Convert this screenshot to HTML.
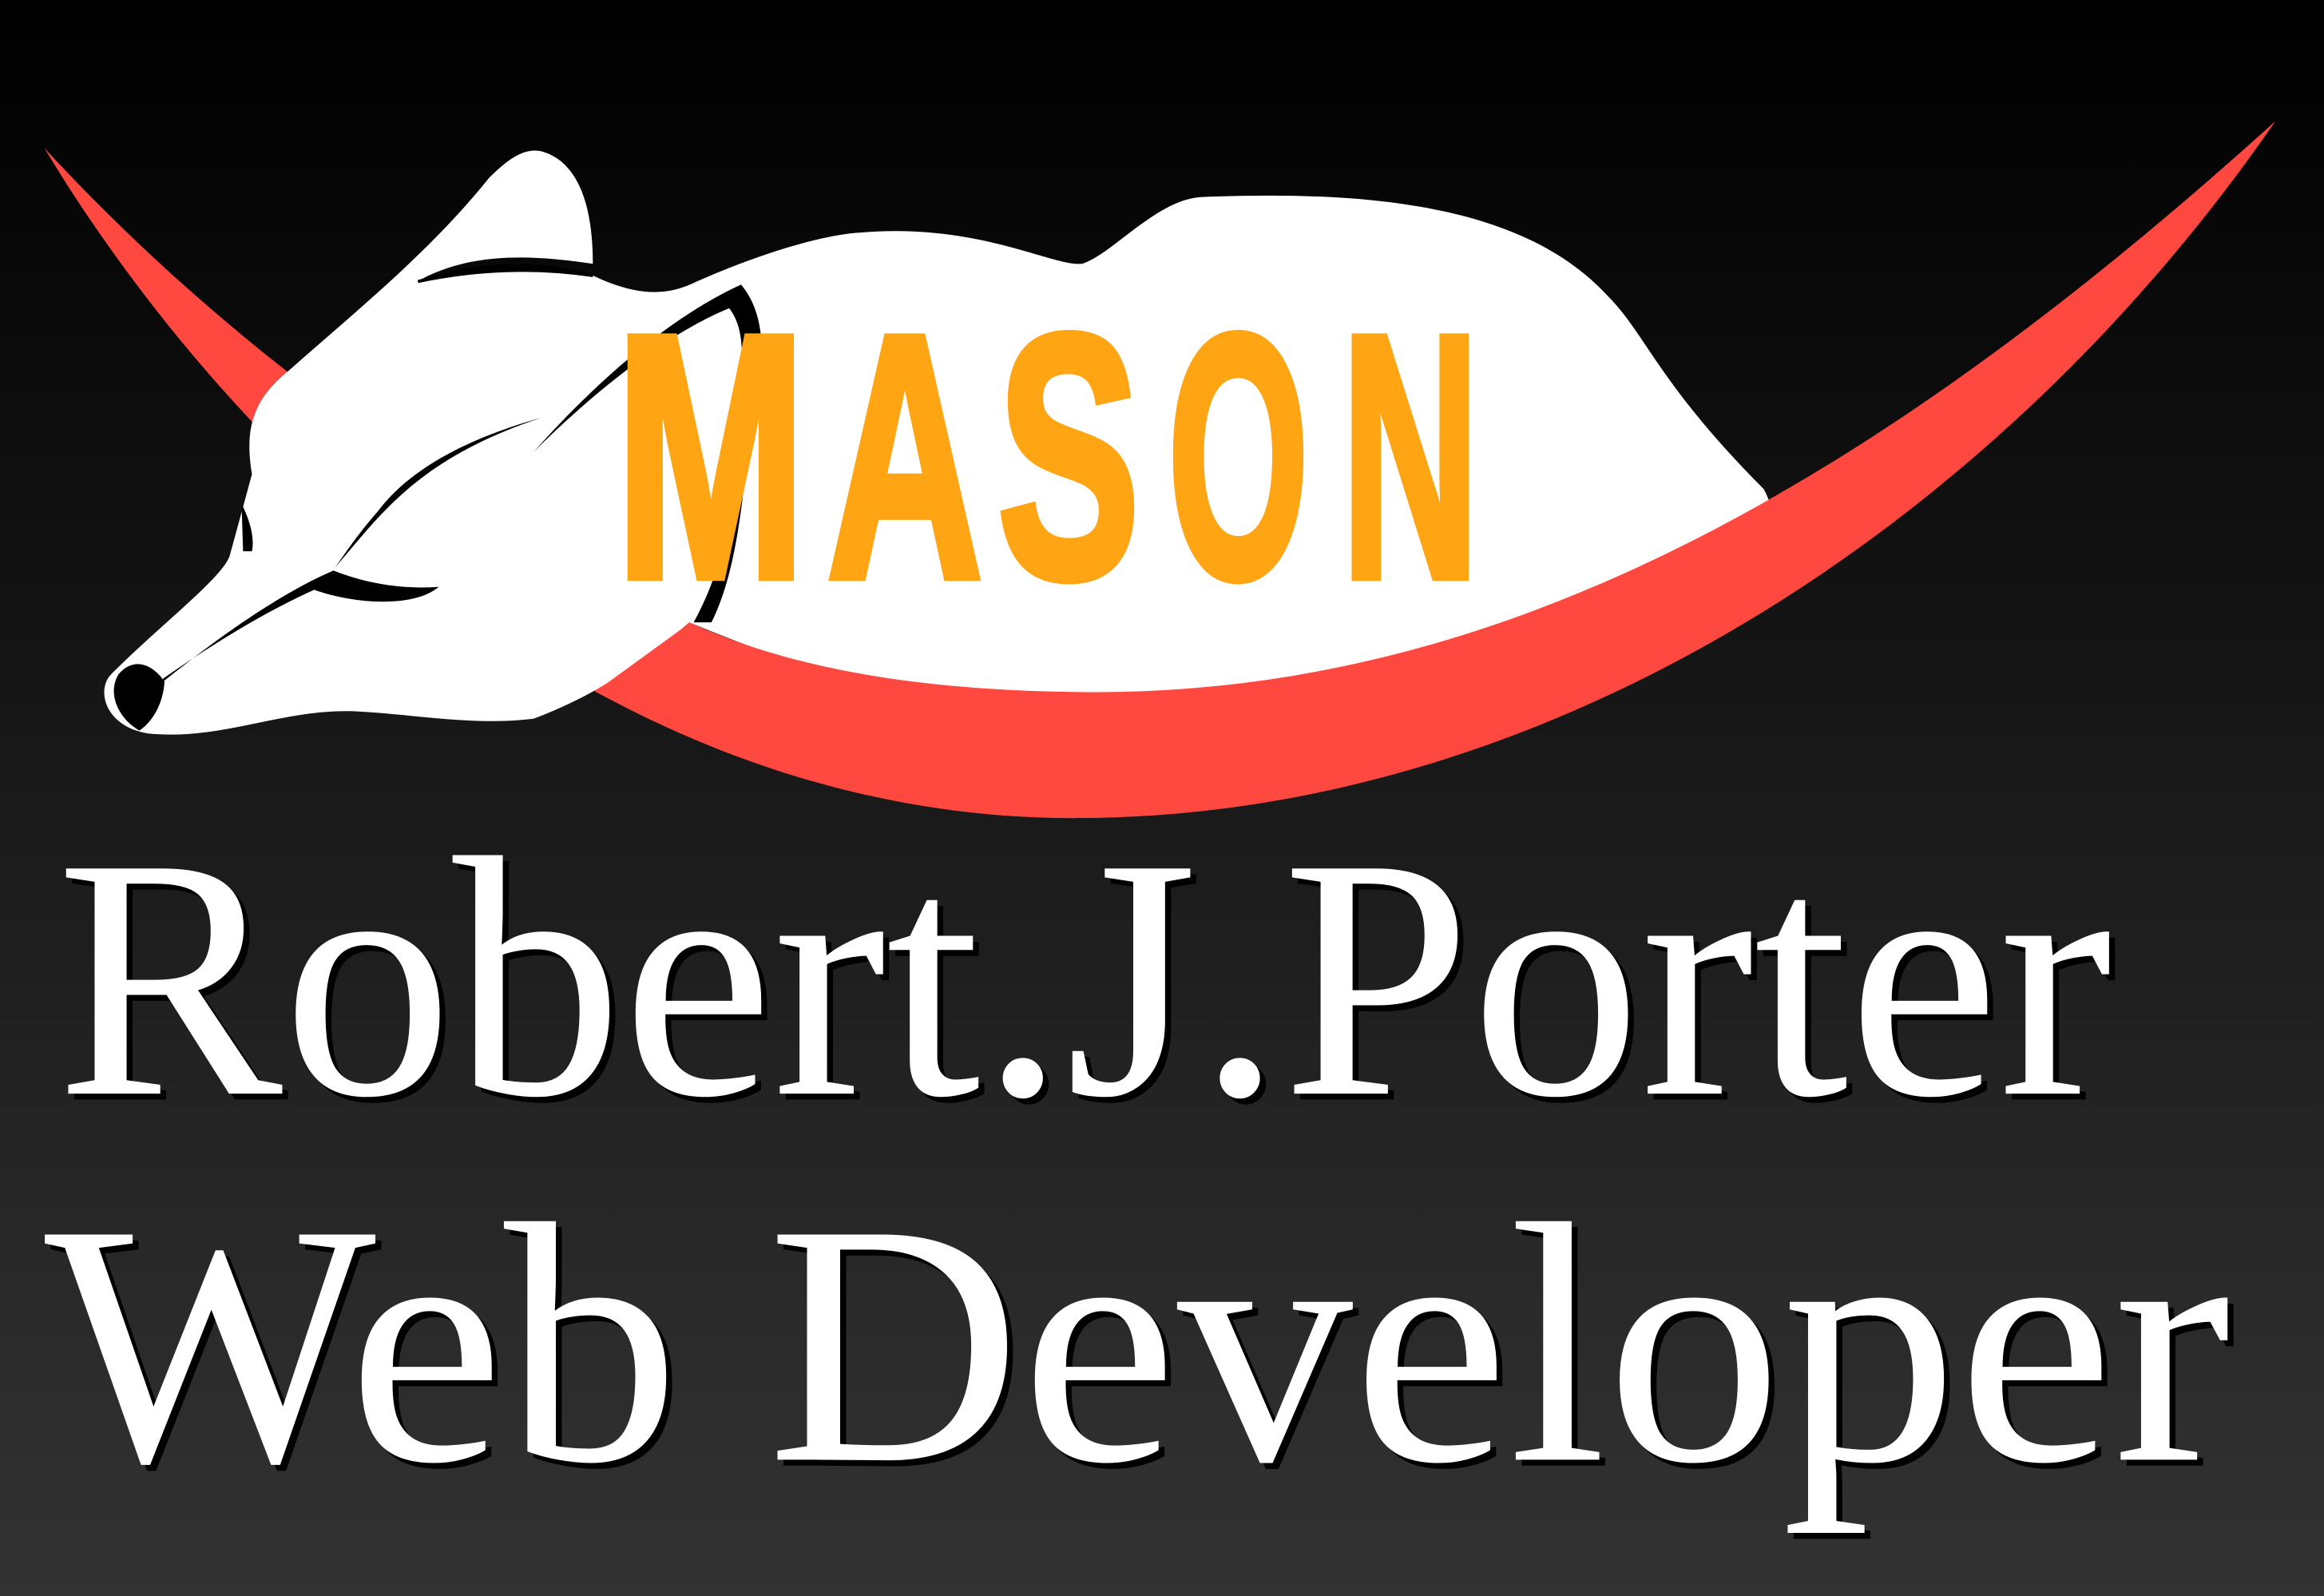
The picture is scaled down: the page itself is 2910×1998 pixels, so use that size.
<!DOCTYPE html>
<html><head><meta charset="utf-8"><style>
html,body{margin:0;padding:0;width:2910px;height:1998px;overflow:hidden;background:#000}
svg{display:block}
.serif{font-family:"Liberation Serif","Times New Roman",Times,serif;}
.mason{font-family:"Liberation Sans",Arial,sans-serif;font-weight:bold;}
</style></head><body>
<svg width="2910" height="1998" viewBox="0 0 1568 1077" preserveAspectRatio="none" xmlns="http://www.w3.org/2000/svg">
<defs><linearGradient id="bg" x1="0" y1="0" x2="0" y2="1">
<stop offset="0" stop-color="#000"/><stop offset="1" stop-color="#333"/></linearGradient>
<clipPath id="front"><polygon points="466,0 1600,0 1600,1077 0,1077 0,520 240,490 360,490 400,468 466,420"/></clipPath>
<path id="cres" d="M30,100 C150,300 400,555 730,552 C1050,550 1350,350 1535,82 C1250,340 1000,470 730,467 C600,466 520,445 465,420 C300,340 150,230 30,100 Z"/>
</defs>
<rect width="1568" height="1077" fill="url(#bg)"/>
<use href="#cres" fill="#ff4840"/>
<path d="M75,455 C110,420 150,390 155,375 L170,320 C165,290 170,270 195,250 C240,210 290,170 330,120 C345,105 355,100 365,102 C395,110 400,150 400,178 C360,172 320,170 285,188 C330,176 370,176 400,186 C430,200 450,200 470,190 C520,168 560,158 580,157 C660,150 710,180 730,178 C750,172 780,135 810,133 C930,128 1030,140 1085,200 C1110,225 1120,260 1190,330 C1250,440 900,600 465,420 C430,450 400,470 360,485 C320,490 280,482 240,480 C190,478 150,500 100,495 C70,490 65,465 75,455 Z" fill="#fff"/>
<use href="#cres" fill="#ff4840" clip-path="url(#front)"/>
<path d="M80,455 C90,443 103,448 111,460 C110,475 103,487 94,493 C80,485 72,468 80,455 Z" fill="#000"/>
<path d="M110,458 C150,430 185,410 212,398 C240,408 280,410 296,396 C270,398 245,393 225,385 C190,400 150,428 110,460 Z" fill="#000"/>
<path d="M226,383 C255,350 280,310 365,282 C300,300 270,325 255,345 C240,362 232,375 226,383 Z" fill="#000"/>
<path d="M360,305 C400,260 450,215 500,192 C515,210 520,240 505,300 C500,350 495,390 480,420 L468,420 C490,380 495,340 498,290 C500,250 505,225 492,208 C450,225 400,265 360,305 Z" fill="#000"/>
<path d="M282,190 C320,178 360,175 400,186 C360,180 320,182 282,190 Z" fill="#000" stroke="#000" stroke-width="2"/>
<path d="M163,340 C168,350 172,362 170,372 L164,372 Z" fill="#000"/>
<g class="mason" font-size="234" fill="#ffa412" stroke="#ffa412" stroke-width="6" stroke-linejoin="miter">
<text x="415" y="389" textLength="129" lengthAdjust="spacingAndGlyphs">M</text>
<text x="558" y="389" textLength="105" lengthAdjust="spacingAndGlyphs">A</text>
<text x="673" y="389" textLength="96" lengthAdjust="spacingAndGlyphs">S</text>
<text x="788" y="389" textLength="95" lengthAdjust="spacingAndGlyphs">O</text>
<text x="905" y="389" textLength="93" lengthAdjust="spacingAndGlyphs">N</text>
</g>
<g class="serif" font-size="232">
<text x="42" y="742" fill="#000" textLength="1387" lengthAdjust="spacingAndGlyphs">Robert.J.Porter</text>
<text x="38" y="738" fill="#fff" textLength="1387" lengthAdjust="spacingAndGlyphs">Robert.J.Porter</text>
<text x="34" y="989" fill="#000" textLength="1475" lengthAdjust="spacingAndGlyphs">Web Developer</text>
<text x="30" y="985" fill="#fff" textLength="1475" lengthAdjust="spacingAndGlyphs">Web Developer</text>
</g>
</svg>
</body></html>
